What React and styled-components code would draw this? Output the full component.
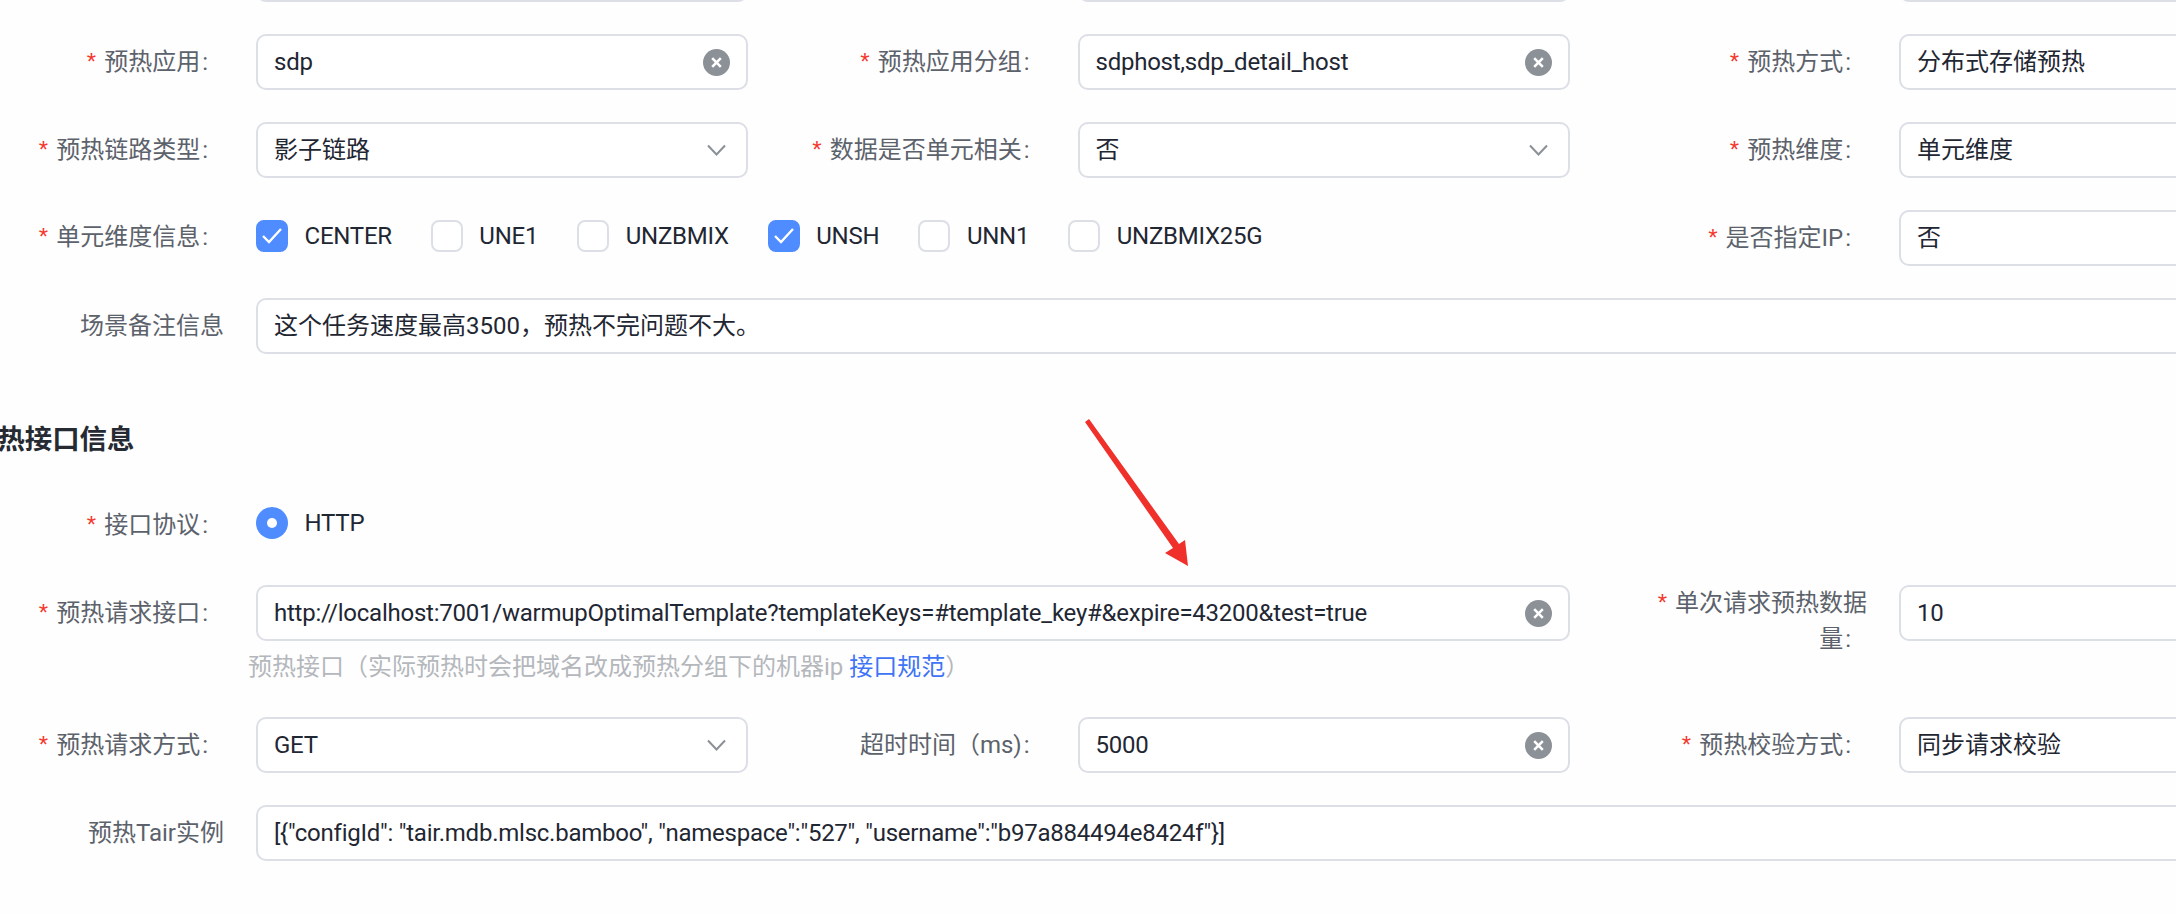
import React from 'react'
import styled, { createGlobalStyle } from 'styled-components'

const GlobalStyle = createGlobalStyle`
    html, body {
        margin: 0;
        width: 2176px;
        height: 914px;
        overflow: hidden;
        background: #fefefe;
    }
    body {
        font-family: Roboto, "Noto Sans CJK SC", sans-serif;
        font-size: 24px;
        color: #1f2733;
    }
`

const Page = styled.div`
    position: relative;
    width: 2176px;
    height: 914px;
    overflow: hidden;
`
const FormGrid = styled.div`
    display: grid;
    grid-template-columns: repeat(3, 764px);
    column-gap: 57.5px;
    row-gap: 32px;
    margin-left: -16px;
    margin-top: ${props => props.top || 0}px;
`
const Item = styled.div`
    display: flex;
    align-items: flex-start;
    min-width: 0;
    grid-column: span ${props => props.span || 1};
`
const Label = styled.div`
    flex: 0 0 240px;
    min-height: 56px;
    margin-right: 32px;
    display: flex;
    align-items: center;
    justify-content: flex-end;
    text-align: right;
    line-height: 36px;
    color: #5c626b;
    padding-bottom: ${props => props.lift || 0}px;
    box-sizing: border-box;
`
const LabelText = styled.span`
    display: block;
`
const Star = styled.span`
    color: #f5372d;
    font-family: "Liberation Sans", sans-serif;
    margin-right: 8px;
`
const Colon = styled.span`
    margin: 0 16px 0 2px;
`
const Control = styled.div`
    flex: 1;
    min-width: 0;
`
const InputBox = styled.div`
    box-sizing: border-box;
    height: 56px;
    border: 2px solid #dcdfe6;
    border-radius: 10px;
    background: #fff;
    padding: 0 16px;
    display: flex;
    align-items: center;
    justify-content: space-between;
    white-space: nowrap;
    line-height: 36px;
`
const Value = styled.span`
    letter-spacing: ${props => (props.$latin ? '-0.24px' : '0')};
`
const Help = styled.div`
    margin: 8px 0 0 -8px;
    line-height: 36px;
    color: #b4b7bc;
    white-space: nowrap;
`
const HelpLink = styled.span`
    color: #3f74f6;
`
const Options = styled.div`
    height: 56px;
    padding-bottom: 4px;
    box-sizing: border-box;
    display: flex;
    align-items: center;
    gap: 39px;
    white-space: nowrap;
    letter-spacing: -0.24px;
`
const Option = styled.div`
    display: flex;
    align-items: center;
    gap: 16.5px;
`
const CheckBox = styled.span`
    box-sizing: border-box;
    width: 32px;
    height: 32px;
    border-radius: 8px;
    border: 2px solid ${props => (props.$checked ? '#4f8cff' : '#dcdfe6')};
    background: ${props => (props.$checked ? '#4f8cff' : '#fff')};
    display: flex;
    align-items: center;
    justify-content: center;
`
const RadioDot = styled.span`
    width: 32px;
    height: 32px;
    border-radius: 50%;
    background: #4f8cff;
    display: flex;
    align-items: center;
    justify-content: center;
    &::after {
        content: "";
        width: 10px;
        height: 10px;
        border-radius: 50%;
        background: #fff;
    }
`
const SectionTitle = styled.div`
    margin: 66px 0 37px -30px;
    font-size: 27.4px;
    font-weight: 600;
    line-height: 40px;
    color: #262b33;
`
const Arrow = styled.svg`
    position: absolute;
    left: 1080px;
    top: 415px;
`

const ClearIcon = () => (
    <svg width="27" height="27" viewBox="0 0 27 27">
        <circle cx="13.5" cy="13.5" r="13.5" fill="#8c9097" />
        <path d="M9.2 9.2 L17.8 17.8 M17.8 9.2 L9.2 17.8" stroke="#fff" strokeWidth="2.6" />
    </svg>
)

const ChevronIcon = () => (
    <svg width="27" height="27" viewBox="0 0 27 27">
        <path d="M5 8.5 L13.5 17.5 L22 8.5" fill="none" stroke="#8c9097" strokeWidth="2" />
    </svg>
)

const CheckIcon = () => (
    <svg width="22" height="22" viewBox="0 0 22 22">
        <path d="M2 11 L8 17 L20 4" fill="none" stroke="#fff" strokeWidth="2.4" />
    </svg>
)

const FormItem = ({ label, required, colon = true, lift, span, children }) => (
    <Item span={span}>
        <Label lift={lift}>
            <LabelText>
                {required && <Star>*</Star>}
                {label}
                {colon && <Colon>:</Colon>}
            </LabelText>
        </Label>
        <Control>{children}</Control>
    </Item>
)

const Input = ({ value = '', icon }) => (
    <InputBox>
        <Value $latin={/^[\x00-\x7f]+$/.test(value)}>{value}</Value>
        {icon === 'clear' && <ClearIcon />}
        {icon === 'select' && <ChevronIcon />}
    </InputBox>
)

const units = [
    { name: 'CENTER', checked: true },
    { name: 'UNE1' },
    { name: 'UNZBMIX' },
    { name: 'UNSH', checked: true },
    { name: 'UNN1' },
    { name: 'UNZBMIX25G' },
]

export default function App() {
    return (
        <Page>
            <GlobalStyle />
            <FormGrid top={-54}>
                <FormItem label="" colon={false}><Input /></FormItem>
                <FormItem label="" colon={false}><Input /></FormItem>
                <FormItem label="" colon={false}><Input /></FormItem>

                <FormItem label="预热应用" required><Input value="sdp" icon="clear" /></FormItem>
                <FormItem label="预热应用分组" required><Input value="sdphost,sdp_detail_host" icon="clear" /></FormItem>
                <FormItem label="预热方式" required><Input value="分布式存储预热" /></FormItem>

                <FormItem label="预热链路类型" required><Input value="影子链路" icon="select" /></FormItem>
                <FormItem label="数据是否单元相关" required><Input value="否" icon="select" /></FormItem>
                <FormItem label="预热维度" required><Input value="单元维度" /></FormItem>

                <FormItem label="单元维度信息" required lift={2} span={2}>
                    <Options>
                        {units.map(unit => (
                            <Option key={unit.name}>
                                <CheckBox $checked={unit.checked}>{unit.checked && <CheckIcon />}</CheckBox>
                                {unit.name}
                            </Option>
                        ))}
                    </Options>
                </FormItem>
                <FormItem label="是否指定IP" required><Input value="否" /></FormItem>

                <FormItem label="场景备注信息" colon={false} span={3}>
                    <Input value="这个任务速度最高3500，预热不完问题不大。" />
                </FormItem>
            </FormGrid>

            <SectionTitle>预热接口信息</SectionTitle>

            <FormGrid>
                <FormItem label="接口协议" required span={3}>
                    <Options>
                        <Option>
                            <RadioDot />
                            HTTP
                        </Option>
                    </Options>
                </FormItem>

                <FormItem label="预热请求接口" required span={2}>
                    <Input value="http://localhost:7001/warmupOptimalTemplate?templateKeys=#template_key#&expire=43200&test=true" icon="clear" />
                    <Help>
                        预热接口（实际预热时会把域名改成预热分组下的机器ip <HelpLink>接口规范</HelpLink>）
                    </Help>
                </FormItem>
                <FormItem label="单次请求预热数据量" required><Input value="10" /></FormItem>

                <FormItem label="预热请求方式" required><Input value="GET" icon="select" /></FormItem>
                <FormItem label="超时时间（ms)"><Input value="5000" icon="clear" /></FormItem>
                <FormItem label="预热校验方式" required><Input value="同步请求校验" /></FormItem>

                <FormItem label="预热Tair实例" colon={false} span={3}>
                    <Input value={'[{"configId": "tair.mdb.mlsc.bamboo", "namespace":"527", "username":"b97a884494e8424f"}]'} />
                </FormItem>
            </FormGrid>

            <Arrow width="120" height="160" viewBox="0 0 120 160">
                <path d="M5 7 L9 4 L99 129 L105 125 L108 151 L85 138 L93 133 Z" fill="#f0302a" />
            </Arrow>
        </Page>
    )
}
